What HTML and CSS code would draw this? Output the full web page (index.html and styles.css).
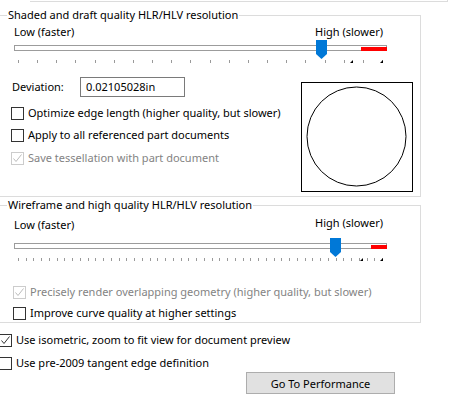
FILE: index.html
```html
<!DOCTYPE html>
<html>
<head>
<meta charset="utf-8">
<link rel="stylesheet" href="styles.css">
</head>
<body>
<div class="page">
  <div class="topline"></div>

  <fieldset class="group g1">
    <legend>Shaded and draft quality HLR/HLV resolution</legend>
    <div class="slider">
      <div class="slider-labels"><span class="lbl-low">Low (faster)</span><span class="lbl-high">High (slower)</span></div>
      <div class="track-wrap">
        <div class="track"><div class="track-red"></div></div>
        <svg class="thumb" width="11" height="19" viewBox="0 0 11 19"><polygon points="0,0 11,0 11,14 5.5,19 0,14" fill="#0078d7"/></svg>
      </div>
      <div class="ticks">
        <span class="mark mark-a"></span><span class="mark mark-end"></span>
      </div>
    </div>
    <div class="g1-body">
      <div class="g1-left">
        <div class="dev-row">
          <span class="dev-label">Deviation:</span>
          <div class="input">0.02105028in</div>
        </div>
        <div class="check row-opt"><span class="box"></span><span>Optimize edge length (higher quality, but slower)</span></div>
        <div class="check row-apply"><span class="box"></span><span>Apply to all referenced part documents</span></div>
        <div class="check row-save disabled"><span class="box"><svg width="11" height="11" viewBox="0 0 11 11"><polyline points="1.5,5.5 4,8.5 9.5,1.5" fill="none" stroke="currentColor" stroke-width="1"/></svg></span><span>Save tessellation with part document</span></div>
      </div>
      <div class="preview">
        <svg width="110" height="108" viewBox="0 0 110 108"><circle cx="54.5" cy="53.5" r="49.5" fill="none" stroke="#000" stroke-width="1"/></svg>
      </div>
    </div>
  </fieldset>

  <fieldset class="group g2">
    <legend>Wireframe and high quality HLR/HLV resolution</legend>
    <div class="slider">
      <div class="slider-labels"><span class="lbl-low">Low (faster)</span><span class="lbl-high">High (slower)</span></div>
      <div class="track-wrap">
        <div class="track"><div class="track-red"></div></div>
        <svg class="thumb" width="11" height="19" viewBox="0 0 11 19"><polygon points="0,0 11,0 11,14 5.5,19 0,14" fill="#0078d7"/></svg>
      </div>
      <div class="ticks">
        <span class="mark mark-a"></span><span class="mark mark-end"></span>
      </div>
    </div>
    <div class="check row-precise disabled"><span class="box"><svg width="11" height="11" viewBox="0 0 11 11"><polyline points="1.5,5.5 4,8.5 9.5,1.5" fill="none" stroke="currentColor" stroke-width="1"/></svg></span><span>Precisely render overlapping geometry (higher quality, but slower)</span></div>
    <div class="check row-curve"><span class="box"></span><span>Improve curve quality at higher settings</span></div>
  </fieldset>

  <div class="check outer row-iso"><span class="box"><svg width="11" height="11" viewBox="0 0 11 11"><polyline points="1.5,5.5 4,8.5 9.5,1.5" fill="none" stroke="currentColor" stroke-width="1"/></svg></span><span>Use isometric, zoom to fit view for document preview</span></div>
  <div class="check outer row-pre"><span class="box"></span><span>Use pre-2009 tangent edge definition</span></div>
  <div class="btn-row"><button class="btn">Go To Performance</button></div>
</div>
</body>
</html>
```
FILE: styles.css
```css
html, body {
  margin: 0;
  padding: 0;
  background: #fff;
}
body {
  width: 450px;
  height: 412px;
  overflow: hidden;
  font-family: "Noto Sans", "DejaVu Sans", sans-serif;
  font-size: 11px;
  line-height: 16px;
  color: #000;
}
.page {
  margin-left: -2px;
  width: 452px;
}
.topline {
  margin-left: 32px;
  width: 417px;
  height: 1px;
  border-bottom: 1px solid #dcdcdc;
  border-right: 1px solid #dcdcdc;
}

.group {
  box-sizing: border-box;
  width: 423px;
  min-width: 0;
  margin: 0;
  padding: 0;
  border: 1px solid #dcdcdc;
}
.group legend {
  margin-left: 8px;
  padding: 0 1px;
  line-height: 16px;
}
.g1 {
  margin-top: 5px;
  padding-top: 1px;
  padding-bottom: 4px;
}
.g2 {
  padding-top: 2px;
  padding-bottom: 1px;
}

/* slider */
.slider {
  margin-left: 15px;
  width: 373px;
}
.slider-labels {
  display: flex;
  justify-content: space-between;
  align-items: flex-start;
  padding-right: 4px;
}
.g2 .lbl-low {
  padding-top: 2px;
}
.g2 .track-wrap {
  margin-top: 5px;
}
.track-wrap {
  position: relative;
  height: 20px;
}
.track {
  position: absolute;
  left: 0;
  right: 0;
  top: 5px;
  height: 4px;
  border: 1px solid #9c9c9c;
  background: #fff;
}
.track-red {
  position: absolute;
  right: -1px;
  top: 1px;
  width: 26px;
  height: 4px;
  background: #ff0000;
}
.g2 .track-red {
  width: 16px;
}
.thumb {
  position: absolute;
  top: 0;
  display: block;
}
.g1 .thumb { left: 302px; }
.g2 .thumb { left: 316px; }

.ticks {
  position: relative;
  margin-left: 4px;
  width: 365px;
  height: 3px;
  background: repeating-linear-gradient(90deg, #9a9a9a 0 1px, transparent 1px 19.158px);
}
.g2 .ticks {
  background: repeating-linear-gradient(90deg, #9a9a9a 0 1px, transparent 1px 7.745px);
}
.mark {
  position: absolute;
  top: 0;
  width: 3px;
  height: 3px;
  background: #000;
  clip-path: polygon(100% 0, 100% 100%, 0 100%);
}
.g1 .mark-a { left: 332px; }
.g2 .mark-a { left: 342px; }
.mark-end { left: 362px; }

/* group 1 body */
.g1-body {
  display: flex;
  align-items: flex-start;
  margin-top: 14px;
}
.g1-left {
  flex: 1;
}
.dev-row {
  display: flex;
  align-items: center;
  height: 20px;
}
.dev-label {
  margin-left: 13px;
  width: 68px;
}
.input {
  box-sizing: border-box;
  width: 105px;
  height: 20px;
  border: 1px solid #7a7a7a;
  padding-left: 5px;
  line-height: 18px;
}
.preview {
  box-sizing: border-box;
  width: 112px;
  height: 110px;
  margin-top: 5px;
  margin-right: 7px;
  border: 1px solid #000;
}
.preview svg {
  display: block;
}

/* checkboxes */
.check {
  display: flex;
  align-items: center;
  height: 16px;
  white-space: nowrap;
}
.box {
  box-sizing: border-box;
  flex: none;
  width: 13px;
  height: 13px;
  border: 1px solid #333;
  margin-right: 4px;
  color: #333;
}
.box svg {
  display: block;
}
.disabled {
  color: #838383;
}
.disabled .box {
  border-color: #cccccc;
  color: #bcbcbc;
}
.g1 .check { margin-left: 12px; }
.row-opt { margin-top: 8px; }
.row-apply { margin-top: 6px; }
.row-save { margin-top: 7px; }

.g2 .check { margin-left: 14px; }
.row-precise { margin-top: 23px; }
.row-curve { margin-top: 5px; }

.outer { margin-left: 1px; }
.outer .box { margin-right: 4px; }
.row-iso { margin-top: 9px; }
.row-pre { margin-top: 7px; }

.btn-row {
  display: flex;
  padding-left: 248px;
  margin-top: 1px;
}
.btn {
  box-sizing: border-box;
  width: 149px;
  height: 22px;
  margin: 0;
  padding: 0;
  background: #e1e1e1;
  border: 1px solid #adadad;
  border-radius: 0;
  font-family: inherit;
  font-size: 11px;
  color: #000;
}
```
